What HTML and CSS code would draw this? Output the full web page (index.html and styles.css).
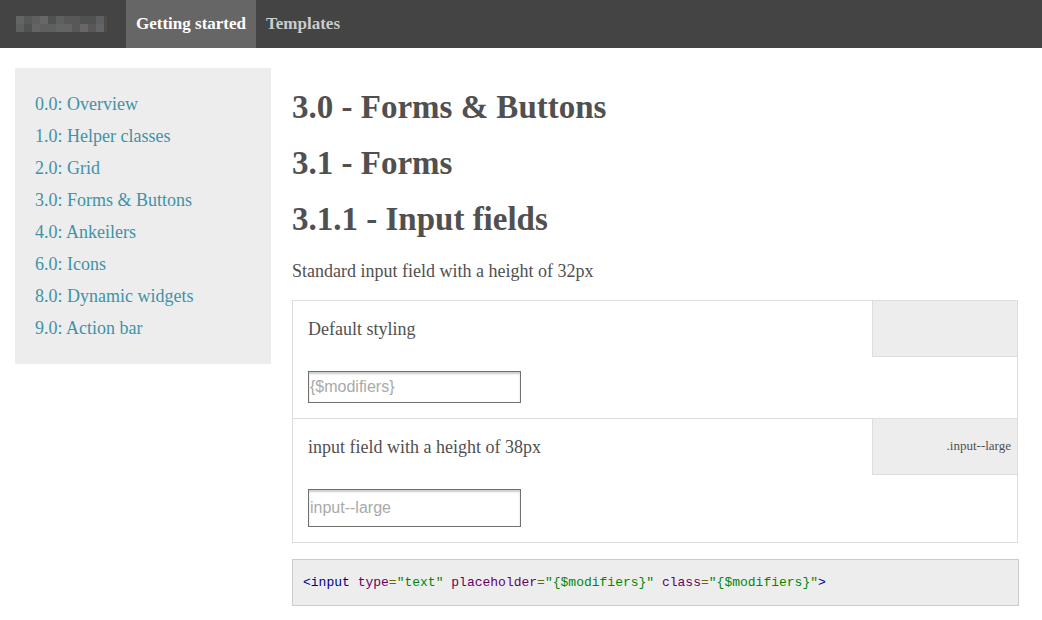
FILE: index.html
```html
<!DOCTYPE html>
<html lang="en">
<head>
<meta charset="utf-8">
<title>Forms &amp; Buttons</title>
<link rel="stylesheet" href="styles.css">
</head>
<body>
<header class="topbar">
  <a class="brand" href="#" aria-label="Home">
    <svg class="brand-mark" width="91" height="16" viewBox="0 0 91 16" shape-rendering="crispEdges" aria-hidden="true">
      <rect width="91" height="16" fill="#585858"/>
      <path fill="#626465" d="M0 0h8v8H0zM16 8h8v8h-8zM40 8h16v8H40zM80 8h8v8h-8z"/>
      <path fill="#686666" d="M24 0h8v8h-8zM64 8h8v8h-8z"/>
      <path fill="#5e6060" d="M16 0h8v8h-8zM40 0h8v8h-8zM80 0h8v8h-8zM0 8h8v8H0zM24 8h16v8H24z"/>
      <path fill="#505151" d="M32 0h8v8h-8zM64 0h16v8H64zM8 8h8v8H8z"/>
      <path fill="#514b48" d="M88 0h3v16h-3z"/>
    </svg>
  </a>
  <nav class="tabs">
    <a class="tab tab-active" href="#" aria-current="page">Getting started</a>
    <a class="tab" href="#">Templates</a>
  </nav>
</header>
<div class="page">
  <nav class="sidebar">
    <a href="#">0.0: Overview</a>
    <a href="#">1.0: Helper classes</a>
    <a href="#">2.0: Grid</a>
    <a href="#">3.0: Forms &amp; Buttons</a>
    <a href="#">4.0: Ankeilers</a>
    <a href="#">6.0: Icons</a>
    <a href="#">8.0: Dynamic widgets</a>
    <a href="#">9.0: Action bar</a>
  </nav>
  <main class="content">
    <h1>3.0 - Forms &amp; Buttons</h1>
    <h2>3.1 - Forms</h2>
    <h3>3.1.1 - Input fields</h3>
    <p class="intro">Standard input field with a height of 32px</p>
    <div class="examples">
      <section class="example">
        <div class="example-head">
          <label class="example-title" for="default-input">Default styling</label>
          <div class="modifier"></div>
        </div>
        <div class="example-body"><input class="input" id="default-input" type="text" placeholder="{$modifiers}"></div>
      </section>
      <section class="example">
        <div class="example-head">
          <label class="example-title" for="large-input">input field with a height of 38px</label>
          <div class="modifier">.input--large</div>
        </div>
        <div class="example-body"><input class="input input--large" id="large-input" type="text" placeholder="input--large"></div>
      </section>
    </div>
    <pre class="code"><code><span class="tag">&lt;input</span> <span class="attr">type</span><span class="eq">=</span><span class="str">"text"</span> <span class="attr">placeholder</span><span class="eq">=</span><span class="str">"{$modifiers}"</span> <span class="attr">class</span><span class="eq">=</span><span class="str">"{$modifiers}"</span><span class="tag">&gt;</span></code></pre>
  </main>
</div>
</body>
</html>
```
FILE: styles.css
```css
* { box-sizing: border-box; }
body {
  margin: 0;
  background: #fff;
  color: #505050;
  font: 18px/24px Georgia, "Liberation Serif", serif;
}
a { text-decoration: none; }
.topbar { display: flex; background: #444; }
.brand { display: flex; align-items: center; padding: 0 19px 0 16px; }
.brand-mark { display: block; }
.tabs { display: flex; }
.tab { padding: 12px 10px; color: #ccc; font-size: 17px; font-weight: bold; }
.tab-active { background: #666; color: #fff; }
.page { display: flex; align-items: flex-start; gap: 21px; padding: 20px 23px 14px 15px; }
.sidebar { flex: 0 0 256px; padding: 20px; background: #ededed; }
.sidebar a { display: block; padding: 4px 0; color: #3e93a8; }
.content { flex: 1; min-width: 0; padding-top: 19px; }
h1, h2, h3 { margin: 0 0 16px; font-size: 33px; line-height: 40px; }
.intro { margin: 0 0 17px; padding-top: 4px; }
.examples { margin-right: 1px; border: 1px solid #ddd; }
.example + .example { border-top: 1px solid #ddd; }
.example-head { display: flex; justify-content: space-between; }
.example-title { padding: 16px 15px; }
.modifier {
  flex: 0 0 20%;
  min-height: 56px;
  padding: 15px 6px;
  border: solid #ddd;
  border-width: 0 0 1px 1px;
  background: #ededed;
  font-size: 13px;
  text-align: right;
}
.example-body { padding: 14px 15px 15px; }
.input {
  display: block;
  width: 213px;
  height: 32px;
  padding: 0 1px;
  border: 1px solid #707070;
  border-radius: 0;
  background: #fff;
  box-shadow: inset 0 2px 2px #ccc;
  font: 16px "Liberation Sans", Arial, sans-serif;
}
.input--large { height: 38px; }
.input::placeholder { color: #a9a9a9; opacity: 1; }
.code {
  margin: 16px 0 0;
  padding: 10px;
  overflow: auto;
  border: 1px solid #ccc;
  background: #ededed;
  font: 13px/25px "Liberation Mono", "Courier New", monospace;
}
.code code { font: inherit; }
.tag { color: #008; }
.attr { color: #606; }
.eq { color: #660; }
.str { color: #080; }
```
